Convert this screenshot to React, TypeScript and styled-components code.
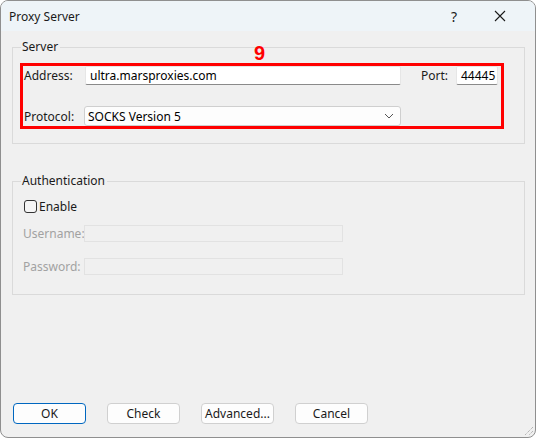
import React, { useState } from "react";
import styled, { createGlobalStyle } from "styled-components";

const GlobalStyle = createGlobalStyle`
  html, body {
    margin: 0;
    padding: 0;
    background: #ffffff;
  }
  * {
    box-sizing: border-box;
  }
`;

const UI_FONT = `"Segoe UI", "Noto Sans", "Liberation Sans", sans-serif`;

const Window = styled.div`
  position: relative;
  width: 536px;
  height: 438px;
  display: flex;
  flex-direction: column;
  background: #f0f0f0;
  border: 1px solid #8f8f8f;
  border-radius: 8px;
  overflow: hidden;
  font-family: ${UI_FONT};
  font-size: 12px;
  color: #000;
`;

const TitleBar = styled.div`
  height: 30px;
  flex: none;
  display: flex;
  align-items: center;
  padding: 0 12px 0 8px;
  background: #eef4f8;
`;

const Title = styled.span`
  flex: 1;
  font-size: 12px;
  color: #1a1a1a;
`;

const CaptionButton = styled.button`
  width: 46px;
  height: 30px;
  border: none;
  background: transparent;
  display: flex;
  align-items: center;
  justify-content: center;
  padding: 0;
  font-family: ${UI_FONT};
  font-size: 14px;
  color: #1a1a1a;
`;

const Body = styled.div`
  flex: 1;
  display: flex;
  flex-direction: column;
  padding: 8px 10px 13px 11px;
`;

const GroupBox = styled.fieldset<{ $height: number; $gap?: number }>`
  margin: ${({ $gap }) => $gap ?? 0}px 0 0 0;
  padding: 0 0 0 7px;
  min-height: ${({ $height }) => $height}px;
  border: 1px solid #dadada;
  border-radius: 0;
`;

const Legend = styled.legend`
  margin-left: 1px;
  padding: 0 2px 0 1px;
  line-height: 16px;
  color: #1a1a1a;
`;

// red annotation frame around the server fields
const Highlight = styled.div`
  position: relative;
  margin-top: 8px;
  width: 484px;
  border: 3px solid #ff0000;
  display: grid;
  grid-template-columns: 62px 316px 19px 36px 42px;
  grid-template-rows: 19px 20px;
  row-gap: 21px;
  align-items: center;
`;

const StepBadge = styled.span`
  position: absolute;
  left: 231px;
  top: -24px;
  font-family: "Liberation Sans", Arial, sans-serif;
  font-weight: 700;
  font-size: 20px;
  color: #ff0000;
`;

const FieldLabel = styled.span<{ $disabled?: boolean }>`
  padding-left: 1px;
  color: ${({ $disabled }) => ($disabled ? "#a2a2a2" : "#1a1a1a")};
  white-space: nowrap;
`;

const TextBox = styled.div`
  height: 19px;
  display: flex;
  align-items: center;
  padding-left: 4px;
  background: #ffffff;
  border: 1px solid #e6e6e6;
  border-bottom-color: #8a8a8a;
  border-radius: 2px;
  color: #000;
  white-space: nowrap;
  overflow: hidden;
`;

const DropDown = styled.div`
  height: 20px;
  margin-left: -1px;
  display: flex;
  align-items: center;
  justify-content: space-between;
  padding: 0 6px 0 3px;
  background: #fdfdfd;
  border: 1px solid #cfcfcf;
  border-radius: 3px;
`;

const AuthRows = styled.div`
  display: grid;
  grid-template-columns: 62px 259px;
  grid-auto-rows: 17px;
  row-gap: 16px;
  align-items: center;
  margin-top: 10px;
  padding-left: 2px;
`;

const CheckRow = styled.label`
  display: flex;
  align-items: center;
  gap: 2px;
  margin-top: 9px;
  padding-left: 4px;
  color: #1a1a1a;
`;

const CheckBox = styled.span<{ $checked: boolean }>`
  width: 13px;
  height: 13px;
  border: 1px solid #333;
  border-radius: 3px;
  background: ${({ $checked }) => ($checked ? "#0067c0" : "#f5f5f5")};
`;

const DisabledBox = styled.div`
  height: 17px;
  background: #f0f0f0;
  border: 1px solid #e2e2e2;
`;

const ButtonRow = styled.div`
  margin-top: auto;
  display: flex;
  gap: 21px;
  padding-left: 1px;
`;

const DialogButton = styled.button<{ $default?: boolean }>`
  width: 73px;
  height: 21px;
  padding: 0;
  font-family: ${UI_FONT};
  font-size: 12px;
  color: #1a1a1a;
  background: #fdfdfd;
  border: 1px solid ${({ $default }) => ($default ? "#0067c0" : "#d0d0d0")};
  border-radius: 4px;
`;

const Grip = styled.svg`
  position: absolute;
  right: 1px;
  bottom: 1px;
`;

const Chevron = () => (
  <svg width="10" height="6" viewBox="0 0 10 6">
    <path d="M1 1l4 4 4-4" fill="none" stroke="#555" strokeWidth="1" />
  </svg>
);

const CloseIcon = () => (
  <svg width="12" height="12" viewBox="0 0 12 12">
    <path d="M1 1l10 10M11 1L1 11" stroke="#1a1a1a" strokeWidth="1.1" />
  </svg>
);

export default function App() {
  const [authOn, setAuthOn] = useState(false);

  return (
    <>
      <GlobalStyle />
      <Window>
        <TitleBar>
          <Title>Proxy Server</Title>
          <CaptionButton>?</CaptionButton>
          <CaptionButton>
            <CloseIcon />
          </CaptionButton>
        </TitleBar>

        <Body>
          <GroupBox $height={105}>
            <Legend>Server</Legend>
            <Highlight>
              <StepBadge>9</StepBadge>
              <FieldLabel>Address:</FieldLabel>
              <TextBox>ultra.marsproxies.com</TextBox>
              <span />
              <FieldLabel>Port:</FieldLabel>
              <TextBox>44445</TextBox>
              <FieldLabel>Protocol:</FieldLabel>
              <DropDown>
                <span>SOCKS Version 5</span>
                <Chevron />
              </DropDown>
            </Highlight>
          </GroupBox>

          <GroupBox $height={122} $gap={29}>
            <Legend>Authentication</Legend>
            <CheckRow onClick={() => setAuthOn(!authOn)}>
              <CheckBox $checked={authOn} />
              Enable
            </CheckRow>
            <AuthRows>
              <FieldLabel $disabled>Username:</FieldLabel>
              <DisabledBox />
              <FieldLabel $disabled>Password:</FieldLabel>
              <DisabledBox />
            </AuthRows>
          </GroupBox>

          <ButtonRow>
            <DialogButton $default>OK</DialogButton>
            <DialogButton>Check</DialogButton>
            <DialogButton>Advanced...</DialogButton>
            <DialogButton>Cancel</DialogButton>
          </ButtonRow>
        </Body>

        <Grip width="12" height="12" viewBox="0 0 12 12">
          <path d="M11 3L3 11M11 7L7 11M11 11L11 11" stroke="#9a9a9a" strokeWidth="1" strokeDasharray="1 1" />
        </Grip>
      </Window>
    </>
  );
}
